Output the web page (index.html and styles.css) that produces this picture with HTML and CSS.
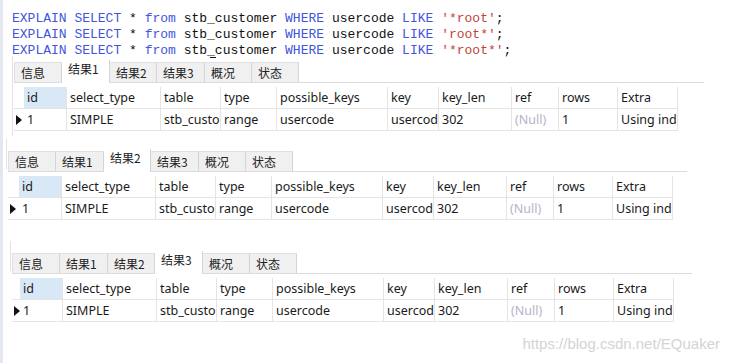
FILE: index.html
```html
<!DOCTYPE html>
<html>

<head>
    <meta charset="UTF-8">
    <title>EXPLAIN LIKE</title>
    <link rel="stylesheet" href="styles.css">
</head>

<body>
    <div class="edge"></div>

    <div class="sql">
        <div class="line"><span class="kw">EXPLAIN SELECT</span> * <span class="kw">from</span> stb_customer <span class="kw">WHERE</span> usercode <span class="kw">LIKE</span> <span class="str">'*root'</span>;</div>
        <div class="line"><span class="kw">EXPLAIN SELECT</span> * <span class="kw">from</span> stb_customer <span class="kw">WHERE</span> usercode <span class="kw">LIKE</span> <span class="str">'root*'</span>;</div>
        <div class="line"><span class="kw">EXPLAIN SELECT</span> * <span class="kw">from</span> stb_customer <span class="kw">WHERE</span> usercode <span class="kw">LIKE</span> <span class="str">'*root*'</span>;</div>
    </div>

    <!-- resultado 1 -->
    <section class="result r1">
        <div class="tabs">
            <div class="tab">信息</div>
            <div class="tab active">结果1</div>
            <div class="tab">结果2</div>
            <div class="tab">结果3</div>
            <div class="tab">概况</div>
            <div class="tab">状态</div>
        </div>
        <div class="grid">
            <div class="mark"></div>
            <div class="hd sel">id</div>
            <div class="hd">select_type</div>
            <div class="hd">table</div>
            <div class="hd">type</div>
            <div class="hd">possible_keys</div>
            <div class="hd">key</div>
            <div class="hd">key_len</div>
            <div class="hd">ref</div>
            <div class="hd">rows</div>
            <div class="hd">Extra</div>

            <div class="mark"><span class="arrow"></span></div>
            <div class="cell">1</div>
            <div class="cell">SIMPLE</div>
            <div class="cell">stb_customer</div>
            <div class="cell">range</div>
            <div class="cell">usercode</div>
            <div class="cell">usercode</div>
            <div class="cell">302</div>
            <div class="cell null">(Null)</div>
            <div class="cell">1</div>
            <div class="cell">Using index condition</div>
        </div>
        <span class="cursor"></span>
    </section>

    <!-- resultado 2 -->
    <section class="result r2">
        <div class="tabs">
            <div class="tab">信息</div>
            <div class="tab">结果1</div>
            <div class="tab active">结果2</div>
            <div class="tab">结果3</div>
            <div class="tab">概况</div>
            <div class="tab">状态</div>
        </div>
        <div class="grid">
            <div class="mark"></div>
            <div class="hd sel">id</div>
            <div class="hd">select_type</div>
            <div class="hd">table</div>
            <div class="hd">type</div>
            <div class="hd">possible_keys</div>
            <div class="hd">key</div>
            <div class="hd">key_len</div>
            <div class="hd">ref</div>
            <div class="hd">rows</div>
            <div class="hd">Extra</div>

            <div class="mark"><span class="arrow"></span></div>
            <div class="cell">1</div>
            <div class="cell">SIMPLE</div>
            <div class="cell">stb_customer</div>
            <div class="cell">range</div>
            <div class="cell">usercode</div>
            <div class="cell">usercode</div>
            <div class="cell">302</div>
            <div class="cell null">(Null)</div>
            <div class="cell">1</div>
            <div class="cell">Using index condition</div>
        </div>
    </section>

    <!-- resultado 3 -->
    <section class="result r3">
        <div class="tabs">
            <div class="tab">信息</div>
            <div class="tab">结果1</div>
            <div class="tab">结果2</div>
            <div class="tab active">结果3</div>
            <div class="tab">概况</div>
            <div class="tab">状态</div>
        </div>
        <div class="grid">
            <div class="mark"></div>
            <div class="hd sel">id</div>
            <div class="hd">select_type</div>
            <div class="hd">table</div>
            <div class="hd">type</div>
            <div class="hd">possible_keys</div>
            <div class="hd">key</div>
            <div class="hd">key_len</div>
            <div class="hd">ref</div>
            <div class="hd">rows</div>
            <div class="hd">Extra</div>

            <div class="mark"><span class="arrow"></span></div>
            <div class="cell">1</div>
            <div class="cell">SIMPLE</div>
            <div class="cell">stb_customer</div>
            <div class="cell">range</div>
            <div class="cell">usercode</div>
            <div class="cell">usercode</div>
            <div class="cell">302</div>
            <div class="cell null">(Null)</div>
            <div class="cell">1</div>
            <div class="cell">Using index condition</div>
        </div>
    </section>

    <div class="watermark">https://blog.csdn.net/EQuaker</div>
</body>

</html>
```

FILE: styles.css
```css
html,
body {
    margin: 0;
    background: #fff;
}

body {
    position: relative;
    width: 731px;
    height: 363px;
    overflow: hidden;
    font-family: "Noto Sans", "Noto Sans CJK SC", sans-serif;
    font-size: 12.5px;
    color: #1a1a1a;
}

/* borda esquerda da janela */
.edge {
    position: absolute;
    left: 0;
    top: 0;
    bottom: 0;
    width: 3px;
    background: #e3e8f0;
}

/* editor de consulta */
.sql {
    padding: 11px 0 0 12px;
    font-family: "Liberation Mono", monospace;
    font-size: 13px;
    line-height: 16px;
    color: #111;
}

.line {
    height: 16px;
    white-space: pre;
}

.kw {
    color: #3f56dc;
}

.str {
    color: #c2453c;
}

/* painel de resultado */
.result {
    position: relative;
    padding-left: var(--x);
}

/* borda do recorte, à esquerda das abas */
.result::before {
    content: "";
    position: absolute;
    left: calc(var(--x) - 2px);
    top: -4px;
    height: var(--edge);
    width: 1px;
    background: #e2e2e2;
}

.r1 {
    --x: 14px;
    --mark: 10px;
    --line: 690px;
    --edge: 80px;
    margin-top: 1px;
}

.r2 {
    --x: 8px;
    --mark: 11px;
    --line: 679px;
    --edge: 30px;
    margin-top: 18px;
}

.r3 {
    --x: 12px;
    --mark: 8px;
    --line: 680px;
    --edge: 30px;
    margin-top: 31px;
}

.r2::before,
.r3::before {
    top: -10px;
}

.tabs {
    display: flex;
    align-items: flex-end;
    width: var(--line);
    height: 23px;
    box-sizing: border-box;
    border-bottom: 1px solid #dcdcdc;
    font-family: "Noto Sans CJK SC", sans-serif;
    font-size: 12px;
}

.tab {
    flex: 0 0 48px;
    box-sizing: border-box;
    height: 20px;
    padding-left: 6px;
    line-height: 19px;
    background: #f0f0f0;
    border-top: 1px solid #e0e0e0;
    border-right: 1px solid #d4d4d4;
    color: #222;
}

.tab:first-child {
    border-left: 1px solid #e0e0e0;
}

.tab:nth-child(3),
.tab:nth-child(5),
.tab:nth-child(6) {
    flex-basis: 47px;
}

.tab.active {
    height: 23px;
    margin-bottom: -1px;
    line-height: 18px;
    background: #fff;
    border-top: none;
}

.grid {
    display: grid;
    grid-template-columns: var(--mark) 43px 94px 60px 56px 111px 51px 73px 47px 59px 60px;
    grid-auto-rows: 22px;
    margin-top: 4px;
}

.hd,
.cell {
    box-sizing: border-box;
    padding-left: 3px;
    line-height: 21px;
    white-space: nowrap;
    overflow: hidden;
    border-right: 1px solid #e4e4e4;
    border-bottom: 1px solid #e4e4e4;
}

.hd.sel {
    background: #d9e8f7;
}

.cell.null {
    color: #b4b4c8;
}

.mark {
    position: relative;
    border-bottom: 1px solid #e4e4e4;
}

.arrow {
    position: absolute;
    left: 2px;
    top: 6px;
    width: 0;
    height: 0;
    border-top: 5px solid transparent;
    border-bottom: 5px solid transparent;
    border-left: 6px solid #111;
}

/* traço do cursor sobre a aba */
.cursor {
    position: absolute;
    left: 210px;
    top: -3px;
    width: 6px;
    height: 1px;
    background: #111;
}

.watermark {
    position: absolute;
    right: 11px;
    top: 335px;
    font-family: "Liberation Sans", Arial, sans-serif;
    font-size: 15px;
    color: #d4d4d4;
}
```
